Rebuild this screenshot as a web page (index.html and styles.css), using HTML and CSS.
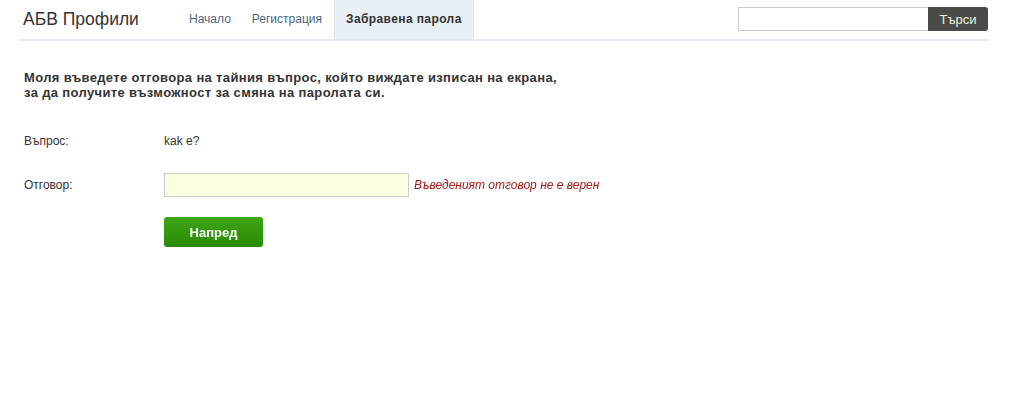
FILE: index.html
```html
<!DOCTYPE html>
<html lang="bg">
<head>
    <meta charset="UTF-8">
    <title>АБВ Профили</title>
    <link rel="stylesheet" href="styles.css">
</head>
<body>
    <div class="page">
        <div class="header">
            <div class="logo">АБВ Профили</div>
            <ul class="nav">
                <li><a href="#">Начало</a></li>
                <li><a href="#">Регистрация</a></li>
                <li class="active"><a href="#">Забравена парола</a></li>
            </ul>
            <form class="search">
                <input type="text">
                <button type="button">Търси</button>
            </form>
        </div>

        <div class="content">
            <p class="intro">Моля въведете отговора на тайния въпрос, който виждате изписан на екрана,<br>за да получите възможност за смяна на паролата си.</p>

            <div class="row">
                <div class="label">Въпрос:</div>
                <div class="value">kak e?</div>
            </div>
            <div class="row">
                <div class="label">Отговор:</div>
                <div class="value">
                    <input type="text" class="answer" autofocus>
                    <span class="error">Въведеният отговор не е верен</span>
                </div>
            </div>
            <div class="row">
                <div class="label"></div>
                <div class="value"><button type="button" class="submit">Напред</button></div>
            </div>
        </div>
    </div>
</body>
</html>
```

FILE: styles.css
```css
* {
    margin: 0;
    padding: 0;
    box-sizing: border-box;
}
body {
    background: #fff;
    color: #333;
    font-family: "Liberation Sans", Arial, sans-serif;
    font-size: 12px;
}
.page {
    width: 970px;
    margin-left: 19px;
}
.header {
    display: flex;
    align-items: stretch;
    height: 41px;
    border-bottom: 2px solid #e3e9ef;
}
.logo {
    font-size: 17.5px;
    color: #333;
    padding: 9px 0 0 4px;
    width: 159px;
}
.nav {
    display: flex;
    list-style: none;
}
.nav li a {
    display: block;
    height: 39px;
    line-height: 39px;
    padding: 0 11px;
    color: #4d6580;
    text-decoration: none;
    font-size: 12px;
}
.nav li:first-child a {
    padding-left: 11px;
    padding-right: 10px;
}
.nav li:nth-child(2) a {
    padding-right: 12px;
}
.nav li.active a {
    background: #e8eff5;
    color: #333;
    font-weight: bold;
    letter-spacing: 0.4px;
    padding: 0 11px;
    border-left: 1px solid #dde5ec;
    border-right: 1px solid #dde5ec;
}
.search {
    margin-left: auto;
    margin-right: 1px;
    display: flex;
    padding-top: 7px;
    height: 31px;
}
.search input {
    width: 190px;
    height: 24px;
    border: 1px solid #ccc;
    border-right: none;
}
.search button {
    width: 60px;
    height: 24px;
    border: none;
    border-radius: 0 3px 3px 0;
    background: #4a4a47;
    color: #eef3dc;
    font-family: "Liberation Sans", Arial, sans-serif;
    font-size: 13px;
}
.content {
    padding: 29px 0 0 5px;
}
.intro {
    font-weight: bold;
    font-size: 13px;
    letter-spacing: 0.35px;
    line-height: 15px;
    color: #333;
    margin-bottom: 19px;
}
.row {
    display: flex;
    align-items: center;
    min-height: 44px;
}
.label {
    width: 140px;
    color: #333;
}
.value {
    display: flex;
    align-items: center;
    font-size: 12px;
}
.answer {
    width: 245px;
    height: 24px;
    padding: 0 4px;
    background: #fcfee0;
    border: 1px solid #ccc;
    outline: none;
    font-family: "Liberation Sans", Arial, sans-serif;
    font-size: 14px;
    caret-color: #000;
}
.error {
    color: #a11a1a;
    font-style: italic;
    margin-left: 5px;
}
.submit {
    width: 99px;
    height: 30px;
    margin-top: 6px;
    border: none;
    border-radius: 3px;
    background: linear-gradient(#3ea515, #2a8a05);
    color: #fff;
    font-family: "Liberation Sans", Arial, sans-serif;
    font-weight: bold;
    font-size: 13px;
}
```
